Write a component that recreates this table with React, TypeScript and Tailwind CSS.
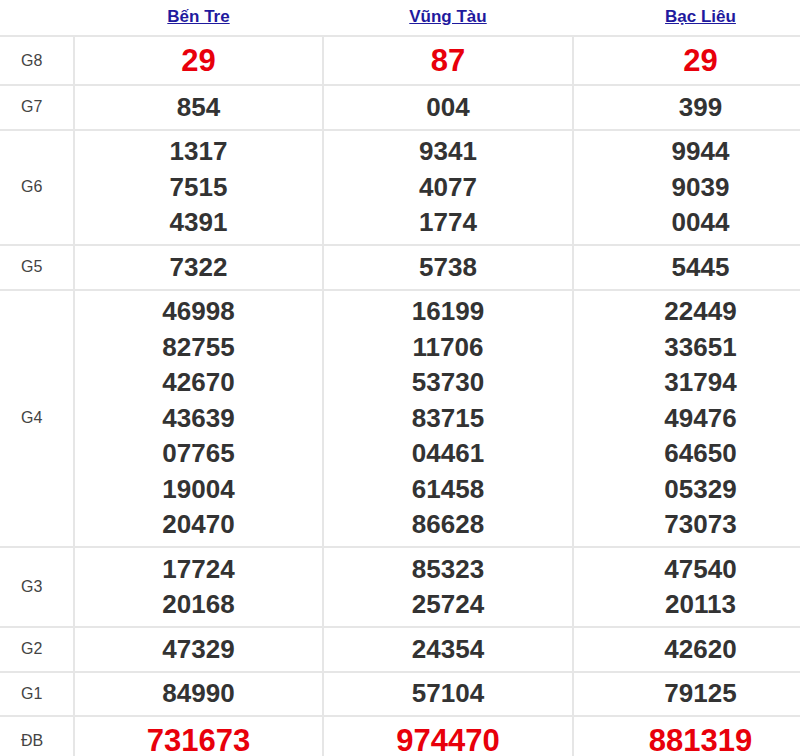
const provinces = ["Bến Tre", "Vũng Tàu", "Bạc Liêu"];

type Prize = { label: string; red?: boolean; values: string[][] };

const prizes: Prize[] = [
  { label: "G8", red: true, values: [["29"], ["87"], ["29"]] },
  { label: "G7", values: [["854"], ["004"], ["399"]] },
  {
    label: "G6",
    values: [
      ["1317", "7515", "4391"],
      ["9341", "4077", "1774"],
      ["9944", "9039", "0044"],
    ],
  },
  { label: "G5", values: [["7322"], ["5738"], ["5445"]] },
  {
    label: "G4",
    values: [
      ["46998", "82755", "42670", "43639", "07765", "19004", "20470"],
      ["16199", "11706", "53730", "83715", "04461", "61458", "86628"],
      ["22449", "33651", "31794", "49476", "64650", "05329", "73073"],
    ],
  },
  {
    label: "G3",
    values: [
      ["17724", "20168"],
      ["85323", "25724"],
      ["47540", "20113"],
    ],
  },
  { label: "G2", values: [["47329"], ["24354"], ["42620"]] },
  { label: "G1", values: [["84990"], ["57104"], ["79125"]] },
  { label: "ĐB", red: true, values: [["731673"], ["974470"], ["881319"]] },
];

const colWidths = ["w-[249px]", "w-[250px]", "flex-1"];

export default function App() {
  return (
    <div className="h-[756px] w-full overflow-hidden bg-white font-['Liberation_Sans',Arial,sans-serif]">
      <div className="w-[827px]">
        <div className="flex h-[35px]">
          <div className="w-[73px]" />
          {provinces.map((name, i) => (
            <div
              key={name}
              className={`${colWidths[i]} border-l-2 border-transparent pt-[4px] text-center`}
            >
              <a className="text-[17px] font-bold text-[#1f1a9e] underline" href="#">
                {name}
              </a>
            </div>
          ))}
        </div>

        {prizes.map((p) => (
          <div key={p.label} className="flex border-t-2 border-[#e6e6e6]">
            <div className="flex w-[73px] items-center pl-[21px] text-[16px] text-[#444]">
              {p.label}
            </div>
            {p.values.map((nums, i) => (
              <div
                key={i}
                className={`${colWidths[i]} border-l-2 border-[#e6e6e6] py-[3.5px] text-center font-bold`}
              >
                {nums.map((n) =>
                  p.red ? (
                    <div key={n} className="text-[31px] leading-[40px] text-[#e8000b]">
                      {n}
                    </div>
                  ) : (
                    <div key={n} className="text-[26px] leading-[35.5px] text-[#333]">
                      {n}
                    </div>
                  )
                )}
              </div>
            ))}
          </div>
        ))}
      </div>
    </div>
  );
}
